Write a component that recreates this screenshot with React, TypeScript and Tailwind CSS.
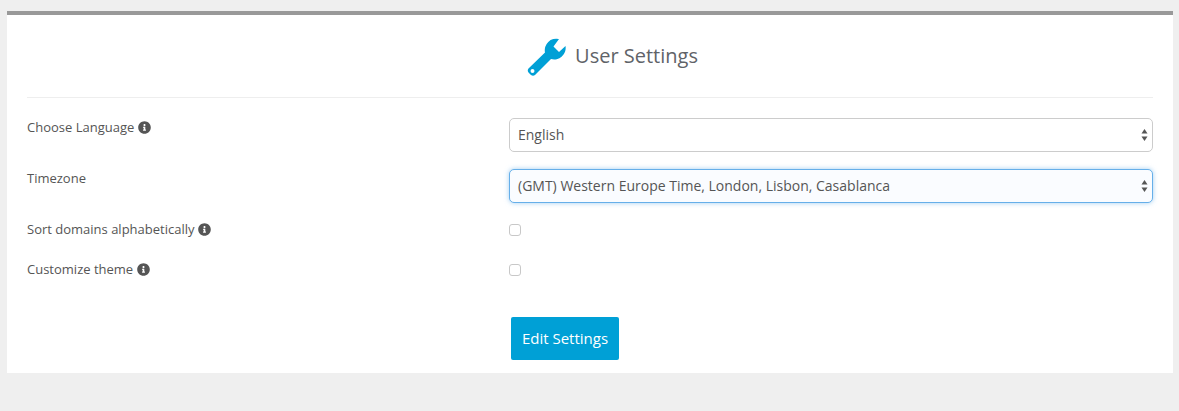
import { FaInfoCircle } from "react-icons/fa";

const SelectArrows = () => (
	<svg
		className="absolute right-[5px] top-1/2 -translate-y-1/2 pointer-events-none"
		width="7"
		height="13"
		viewBox="0 0 7 13"
	>
		<path d="M3.5 0.5 L6.5 5 L0.5 5 Z" fill="#555" />
		<path d="M0.5 8 L6.5 8 L3.5 12.5 Z" fill="#555" />
	</svg>
);

function InfoLabel({ text, info }: { text: string; info?: boolean }) {
	return (
		<div className="flex items-center gap-[4px] text-[13px] leading-[18px] text-[#555]">
			<span>{text}</span>
			{info && <FaInfoCircle className="w-[13px] h-[13px] text-[#555]" />}
		</div>
	);
}

export default function App() {
	return (
		<div
			className="h-[411px] bg-[#efefef] pt-[11px] px-[7px] overflow-hidden"
			style={{ fontFamily: '"Open Sans", sans-serif' }}
		>
			<div className="h-[362px] w-[1166px] bg-white border-t-[4px] border-[#999999] px-[20px]">
				{/* Header */}
				<div className="h-[83px] flex items-center justify-center gap-[9px] border-b border-[#eeeeee] pl-[45px]">
					<svg width="39" height="39" viewBox="0 0 39 39" className="mt-[3px] text-[#00a0d6]">
						<path
							fill="currentColor"
							fillRule="evenodd"
							d="M32 1 A11.5 11.5 0 0 0 18 14.5 L1.5 30.5 Q0 32.5 1.5 34.5 L4 37 Q6 38.5 8 37 L24 21 A11.5 11.5 0 0 0 38.5 8 L32 14 L26.5 8.5 Z M5.5 31 A2 2 0 1 0 5.5 35 A2 2 0 1 0 5.5 31 Z"
						/>
					</svg>
					<h1 className="text-[20px] leading-[28px] text-[#5f6368]">User Settings</h1>
				</div>

				{/* Form rows */}
				<div className="grid grid-cols-[482px_644px] mt-[20px]">
					<div>
						<InfoLabel text="Choose Language" info />
					</div>
					<div className="relative h-[34px]">
						<div className="h-full flex items-center pl-[8px] bg-white border border-[#cccccc] rounded-[5px] text-[14px] text-[#555]">
							<span className="-translate-y-px">English</span>
						</div>
						<SelectArrows />
					</div>

					<div className="mt-[17px]">
						<InfoLabel text="Timezone" />
					</div>
					<div className="relative h-[34px] mt-[17px]">
						<div className="h-full flex items-center pl-[8px] bg-[#fafcff] border border-[#66afe9] rounded-[5px] text-[14px] text-[#555] shadow-[0_0_5px_rgba(102,175,233,0.6)]">
							<span className="-translate-y-px">(GMT) Western Europe Time, London, Lisbon, Casablanca</span>
						</div>
						<SelectArrows />
					</div>

					<div className="mt-[17px]">
						<InfoLabel text="Sort domains alphabetically" info />
					</div>
					<div className="mt-[21px] h-[12px]">
						<div className="w-[12px] h-[12px] border border-[#c8c8c8] rounded-[3px] bg-white" />
					</div>

					<div className="mt-[22px]">
						<InfoLabel text="Customize theme" info />
					</div>
					<div className="mt-[26px] h-[12px]">
						<div className="w-[12px] h-[12px] border border-[#c8c8c8] rounded-[3px] bg-white" />
					</div>

					<div />
					<div className="mt-[39px] pl-[2px]">
						<button className="w-[108px] h-[43px] bg-[#00a0d6] rounded-[2px] text-white text-[15px]">
							Edit Settings
						</button>
					</div>
				</div>
			</div>
		</div>
	);
}
